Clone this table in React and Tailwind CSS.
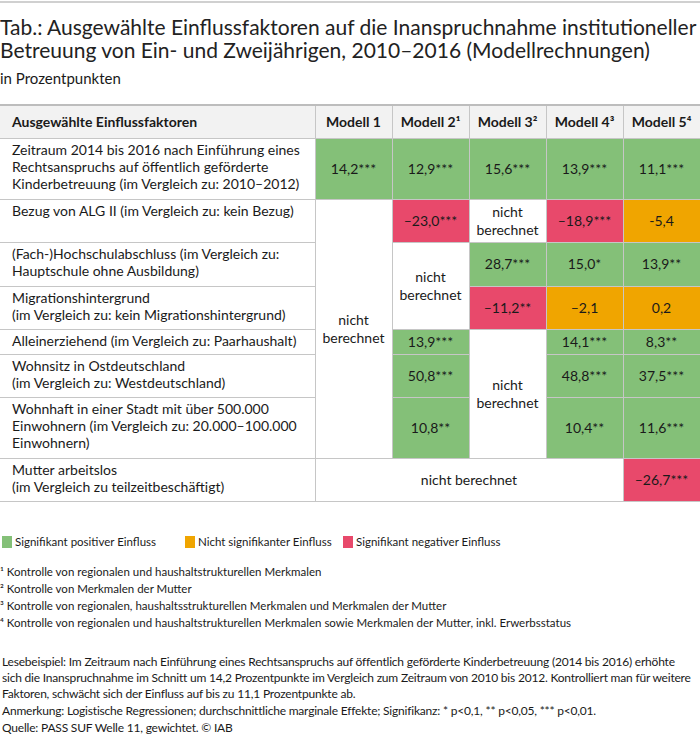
import React from "react";

const G = "bg-[#84c078]";
const O = "bg-[#f0a500]";
const R = "bg-[#e8496b]";
const W = "bg-white";

function V({ c, children, rs = 1, cs = 1 }) {
  return (
    <td
      rowSpan={rs}
      colSpan={cs}
      className={`${c} border border-[#c6c6c6] text-center align-middle text-[14px] leading-[18px] text-[#1a1a1a]`}
    >
      {children}
    </td>
  );
}

function L({ children, h }) {
  return (
    <td
      className={`border-y border-r border-[#c6c6c6] pl-[12px] pr-1 pt-[2px] align-top text-[14px] leading-[17px] text-[#1a1a1a] ${h}`}
    >
      {children}
    </td>
  );
}

const NB = (
  <span>
    nicht
    <br />
    berechnet
  </span>
);

function Leg({ c, t, w }) {
  return (
    <div className={`flex items-center ${w}`}>
      <span className={`inline-block h-[12px] w-[10px] shrink-0 ${c}`} />
      <span className="ml-[3px] whitespace-nowrap">{t}</span>
    </div>
  );
}

export default function App() {
  return (
    <div
      className="w-[700px] h-[750px] bg-white text-[#1a1a1a] overflow-hidden"
      style={{ fontFamily: "Lato, 'Liberation Sans', sans-serif" }}
    >
      <div className="border-t-2 border-[#d0d0d0] mt-[1px]" />
      <div className="pt-[12px] text-[21px] leading-[23px] text-[#222] whitespace-nowrap">
        Tab.: Ausgewählte Einflussfaktoren auf die Inanspruchnahme institutioneller
        <br />
        Betreuung von Ein- und Zweijährigen, 2010–2016 (Modellrechnungen)
      </div>
      <div className="mt-[8px] text-[15px] leading-[18px]">in Prozentpunkten</div>

      <table className="mt-[17px] w-[700px] table-fixed border-collapse">
        <colgroup>
          <col className="w-[315px]" />
          <col className="w-[77px]" />
          <col className="w-[77px]" />
          <col className="w-[77px]" />
          <col className="w-[77px]" />
          <col className="w-[77px]" />
        </colgroup>
        <thead>
          <tr className="h-[33px] bg-[#f2f2f2] border-t-2 border-[#bdbdbd]">
            <th className="border-r border-b border-[#c6c6c6] pl-[12px] text-left font-bold text-[14px]">
              Ausgewählte Einflussfaktoren
            </th>
            {["1", "2¹", "3²", "4³", "5⁴"].map((m) => (
              <th key={m} className="border border-[#c6c6c6] text-center font-bold text-[14px]">
                Modell {m}
              </th>
            ))}
          </tr>
        </thead>
        <tbody>
          <tr className="h-[61px]">
            <L>
              Zeitraum 2014 bis 2016 nach Einführung eines Rechtsanspruchs auf öffentlich geförderte
              Kinderbetreuung (im Vergleich zu: 2010–2012)
            </L>
            <V c={G}>14,2***</V>
            <V c={G}>12,9***</V>
            <V c={G}>15,6***</V>
            <V c={G}>13,9***</V>
            <V c={G}>11,1***</V>
          </tr>
          <tr className="h-[43px]">
            <L>Bezug von ALG II (im Vergleich zu: kein Bezug)</L>
            <V c={W} rs={6}>
              {NB}
            </V>
            <V c={R}>–23,0***</V>
            <V c={W}>{NB}</V>
            <V c={R}>–18,9***</V>
            <V c={O}>-5,4</V>
          </tr>
          <tr className="h-[44px]">
            <L>
              (Fach-)Hochschulabschluss (im Vergleich zu:
              <br />
              Hauptschule ohne Ausbildung)
            </L>
            <V c={W} rs={2}>
              {NB}
            </V>
            <V c={G}>28,7***</V>
            <V c={G}>15,0*</V>
            <V c={G}>13,9**</V>
          </tr>
          <tr className="h-[43px]">
            <L>
              Migrationshintergrund
              <br />
              (im Vergleich zu: kein Migrationshintergrund)
            </L>
            <V c={R}>–11,2**</V>
            <V c={O}>–2,1</V>
            <V c={O}>0,2</V>
          </tr>
          <tr className="h-[25px]">
            <L>Alleinerziehend (im Vergleich zu: Paarhaushalt)</L>
            <V c={G}>13,9***</V>
            <V c={W} rs={3}>
              {NB}
            </V>
            <V c={G}>14,1***</V>
            <V c={G}>8,3**</V>
          </tr>
          <tr className="h-[43px]">
            <L>
              Wohnsitz in Ostdeutschland
              <br />
              (im Vergleich zu: Westdeutschland)
            </L>
            <V c={G}>50,8***</V>
            <V c={G}>48,8***</V>
            <V c={G}>37,5***</V>
          </tr>
          <tr className="h-[61px]">
            <L>
              Wohnhaft in einer Stadt mit über 500.000
              <br />
              Einwohnern (im Vergleich zu: 20.000–100.000
              <br />
              Einwohnern)
            </L>
            <V c={G}>10,8**</V>
            <V c={G}>10,4**</V>
            <V c={G}>11,6***</V>
          </tr>
          <tr className="h-[43px]">
            <L>
              Mutter arbeitslos
              <br />
              (im Vergleich zu teilzeitbeschäftigt)
            </L>
            <V c={W} cs={4}>
              nicht berechnet
            </V>
            <V c={R}>–26,7***</V>
          </tr>
        </tbody>
      </table>

      <div className="mt-[33px] flex pl-[2px] text-[11.5px] leading-[14px]">
        <Leg c={G} t="Signifikant positiver Einfluss" w="w-[183px]" />
        <Leg c={O} t="Nicht signifikanter Einfluss" w="w-[158px]" />
        <Leg c={R} t="Signifikant negativer Einfluss" w="w-[200px]" />
      </div>

      <div className="mt-[14px] text-[11.5px] leading-[17px]">
        <div>¹ Kontrolle von regionalen und haushaltstrukturellen Merkmalen</div>
        <div>² Kontrolle von Merkmalen der Mutter</div>
        <div>³ Kontrolle von regionalen, haushaltsstrukturellen Merkmalen und Merkmalen der Mutter</div>
        <div>
          ⁴ Kontrolle von regionalen und haushaltstrukturellen Merkmalen sowie Merkmalen der Mutter, inkl.
          Erwerbsstatus
        </div>
      </div>

      <div className="mt-[23px] pl-[2px] text-[12px] leading-[16px] tracking-[-0.2px]">
        <div>
          Lesebeispiel: Im Zeitraum nach Einführung eines Rechtsanspruchs auf öffentlich geförderte
          Kinderbetreuung (2014 bis 2016) erhöhte
          <br />
          sich die Inanspruchnahme im Schnitt um 14,2 Prozentpunkte im Vergleich zum Zeitraum von 2010 bis
          2012. Kontrolliert man für weitere
          <br />
          Faktoren, schwächt sich der Einfluss auf bis zu 11,1 Prozentpunkte ab.
        </div>
        <div className="mt-[1px]">
          Anmerkung: Logistische Regressionen; durchschnittliche marginale Effekte; Signifikanz: * p&lt;0,1,
          ** p&lt;0,05, *** p&lt;0,01.
        </div>
        <div className="mt-[1px]">Quelle: PASS SUF Welle 11, gewichtet. © IAB</div>
      </div>
      <div className="mt-[16px] border-t-2 border-[#d0d0d0]" />
    </div>
  );
}
